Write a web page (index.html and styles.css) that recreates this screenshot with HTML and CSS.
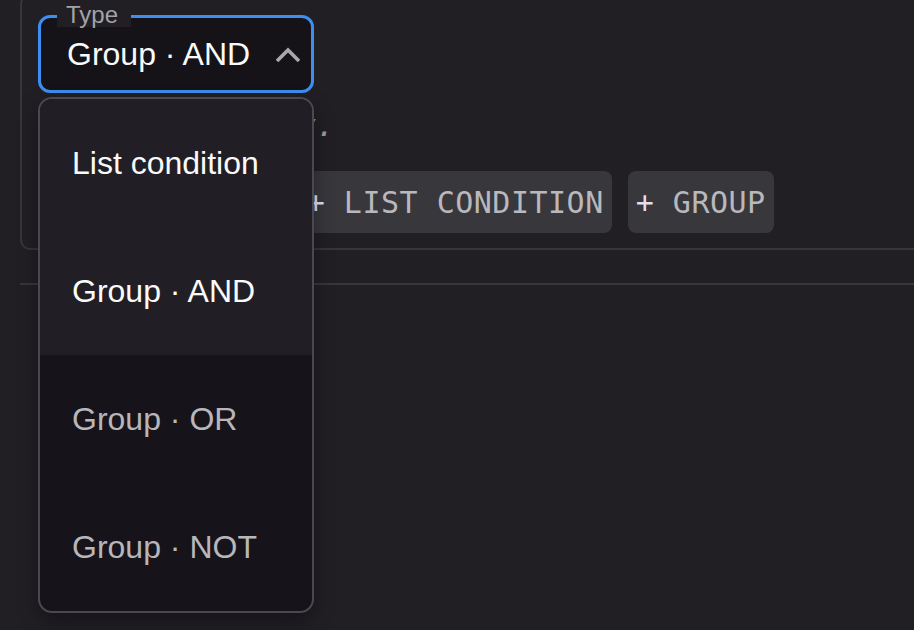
FILE: index.html
```html
<!DOCTYPE html>
<html lang="en">
<head>
    <meta charset="UTF-8">
    <meta name="viewport" content="width=device-width, initial-scale=1.0">
    <title>Filter builder</title>
    <link rel="stylesheet" href="styles.css">
</head>
<body>
    <div class="page">
        <div class="group-card">
            <div class="select-field">
                <span class="select-label">Type</span>
                <div class="select-box">
                    <span class="select-value">Group · AND</span>
                    <svg class="select-icon" width="26" height="16" viewBox="0 0 26 16">
                        <path d="M2 14 L13 3 L24 14" fill="none" stroke="currentColor" stroke-width="3.6"/>
                    </svg>
                </div>

                <!-- open dropdown -->
                <ul class="menu">
                    <li class="menu-item hover">List condition</li>
                    <li class="menu-item selected">Group · AND</li>
                    <li class="menu-item">Group · OR</li>
                    <li class="menu-item">Group · NOT</li>
                </ul>
            </div>

            <p class="hint">Currently empty.</p>

            <div class="buttons">
                <button class="btn btn-field"><span class="plus">+</span> TEXT FIELD</button>
                <button class="btn"><span class="plus">+</span> LIST CONDITION</button>
                <button class="btn"><span class="plus">+</span> GROUP</button>
            </div>
        </div>

        <hr class="divider">
    </div>
</body>
</html>
```

FILE: styles.css
```css
* {
    box-sizing: border-box;
    margin: 0;
    padding: 0;
}

body {
    font-family: 'Liberation Sans', Arial, Helvetica, sans-serif;
    background: #211f24;
    color: #fafafa;
    overflow: hidden;
    height: 630px;
}

.page {
    padding-left: 20px;
}

.group-card {
    margin-top: -6px;
    margin-right: -40px;
    border: 2px solid #36353a;
    border-radius: 10px;
    padding: 19px 16px 15px;
}

/* outlined select, focused */
.select-field {
    position: relative;
    width: 276px;
}

.select-box {
    height: 78px;
    display: flex;
    align-items: center;
    justify-content: space-between;
    padding-left: 26px;
    padding-right: 10px;
    background: #151318;
    border: 3px solid #3d8ef0;
    border-radius: 12px;
}

.select-label {
    position: absolute;
    top: -12px;
    left: 19px;
    padding: 0 13px 0 9px;
    background: #211f24;
    color: #a3a2a7;
    font-size: 24px;
    line-height: 24px;
}

.select-value {
    font-size: 32px;
    line-height: 72px;
}

.select-icon {
    color: #a9a8ad;
    margin-top: 2px;
}

.menu {
    position: absolute;
    top: calc(100% + 4px);
    left: 0;
    width: 100%;
    list-style: none;
    background: #16141a;
    border: 2px solid #4a494f;
    border-radius: 14px;
    overflow: hidden;
    box-shadow: 0 8px 20px rgba(0, 0, 0, 0.35);
    z-index: 10;
}

.menu-item {
    height: 128px;
    display: flex;
    align-items: center;
    padding-left: 32px;
    font-size: 32px;
    color: #b7b6ba;
}

.menu-item.hover,
.menu-item.selected {
    background: #211f25;
    color: #fafafa;
}

.hint {
    margin-top: 13px;
    font-family: 'DejaVu Sans Mono', 'Liberation Mono', monospace;
    font-style: italic;
    font-size: 30px;
    line-height: 40px;
    letter-spacing: 0.5px;
    color: #9b9a9f;
}

.buttons {
    display: flex;
    gap: 16px;
    margin-top: 25px;
}

.btn {
    height: 62px;
    padding: 0 8px;
    border: none;
    border-radius: 8px;
    background: #38373c;
    color: #b9b8bc;
    font-family: 'DejaVu Sans Mono', 'Liberation Mono', monospace;
    font-size: 30px;
    letter-spacing: 0.5px;
    white-space: pre;
    cursor: pointer;
}

.btn-field {
    padding: 0 11px;
}

.plus {
    color: #e2def0;
}

.divider {
    margin-top: 33px;
    margin-right: -20px;
    border: none;
    border-top: 2px solid #37363b;
}
```
